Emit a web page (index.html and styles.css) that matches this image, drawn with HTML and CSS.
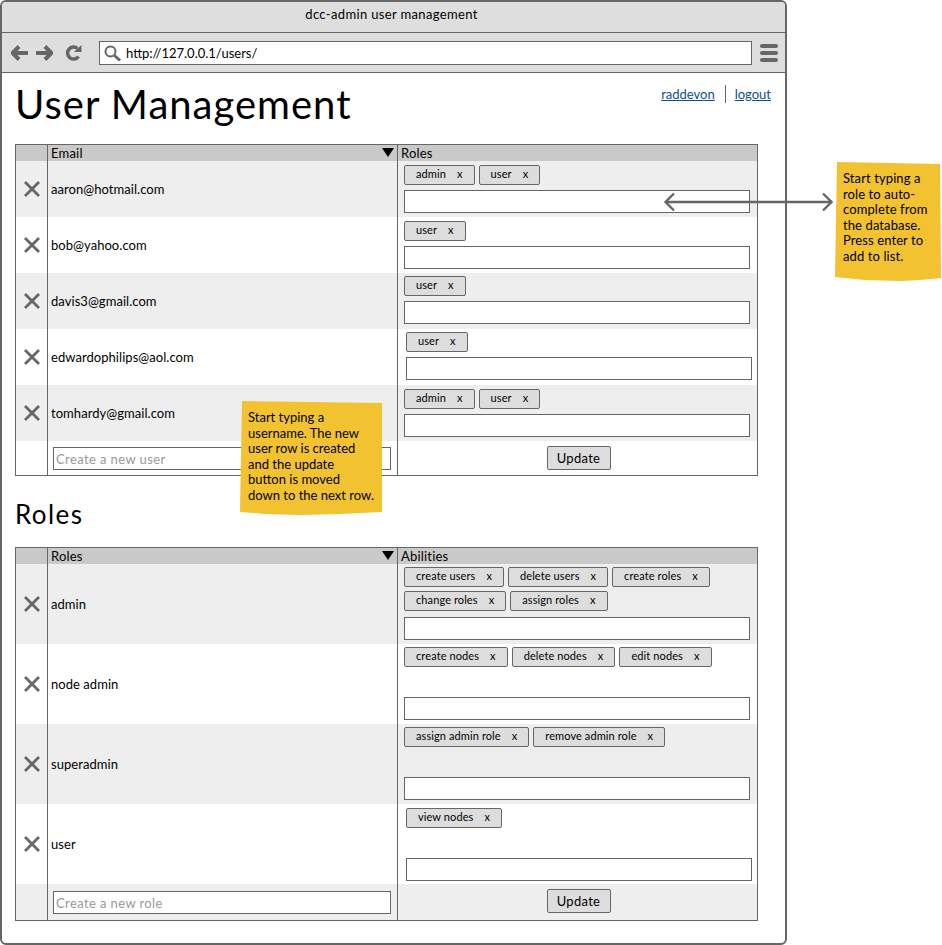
FILE: index.html
```html
<!DOCTYPE html>
<html lang="en">
<head>
  <meta charset="UTF-8">
  <title>dcc-admin user management</title>
  <link rel="stylesheet" href="styles.css">
</head>
<body>
  <div class="window">
    <div class="titlebar">dcc-admin user management</div>
    <div class="toolbar">
      <svg class="nav-icon" width="18" height="16" viewBox="0 0 18 16"><path d="M8 1.500 1.500 8 8 14.500M2.500 8H17" fill="none" stroke="#666" stroke-width="4"/></svg>
      <svg class="nav-icon forward" width="17" height="16" viewBox="0 0 17 16"><path d="M9 1.500 15.500 8 9 14.500M14.500 8H0" fill="none" stroke="#666" stroke-width="4"/></svg>
      <svg class="nav-icon" width="17" height="16" viewBox="0 0 17 16"><path d="M13.500 11.500A6 6 0 1 1 12.500 3.500" fill="none" stroke="#666" stroke-width="3.500"/><path d="M9 7h7.500V0z" fill="#666"/></svg>
      <div class="address">
        <svg width="17" height="16" viewBox="0 0 17 16"><circle cx="6.500" cy="6.500" r="5" fill="none" stroke="#666" stroke-width="2"/><path d="M10.500 10.500 16 15.500" stroke="#666" stroke-width="3"/></svg>
        <span>http://127.0.0.1/users/</span>
      </div>
      <div class="menu-icon"><i></i><i></i><i></i></div>
    </div>

    <div class="main">
      <div class="page-head">
        <h1>User Management</h1>
        <div class="links"><a href="#">raddevon</a><a href="#">logout</a></div>
      </div>

      <div class="table">
        <div class="row head">
          <div class="cell"></div>
          <div class="cell sortable">Email<b class="sort"></b></div>
          <div class="cell">Roles</div>
        </div>
        <div class="row user-row grey">
          <div class="cell del"><svg width="16" height="16" viewBox="0 0 16 16"><path d="M1 1 15 15M15 1 1 15" stroke="#666" stroke-width="2.800"/></svg></div>
          <div class="cell name">aaron@hotmail.com</div>
          <div class="cell tags low"><div class="tag-list"><span class="tag">admin<u>x</u></span><span class="tag">user<u>x</u></span></div><div class="box"></div></div>
        </div>
        <div class="row user-row">
          <div class="cell del"><svg width="16" height="16" viewBox="0 0 16 16"><path d="M1 1 15 15M15 1 1 15" stroke="#666" stroke-width="2.800"/></svg></div>
          <div class="cell name">bob@yahoo.com</div>
          <div class="cell tags low"><div class="tag-list"><span class="tag">user<u>x</u></span></div><div class="box"></div></div>
        </div>
        <div class="row user-row grey">
          <div class="cell del"><svg width="16" height="16" viewBox="0 0 16 16"><path d="M1 1 15 15M15 1 1 15" stroke="#666" stroke-width="2.800"/></svg></div>
          <div class="cell name">davis3@gmail.com</div>
          <div class="cell tags high"><div class="tag-list"><span class="tag">user<u>x</u></span></div><div class="box"></div></div>
        </div>
        <div class="row user-row">
          <div class="cell del"><svg width="16" height="16" viewBox="0 0 16 16"><path d="M1 1 15 15M15 1 1 15" stroke="#666" stroke-width="2.800"/></svg></div>
          <div class="cell name">edwardophilips@aol.com</div>
          <div class="cell tags shift high"><div class="tag-list"><span class="tag">user<u>x</u></span></div><div class="box"></div></div>
        </div>
        <div class="row user-row grey">
          <div class="cell del"><svg width="16" height="16" viewBox="0 0 16 16"><path d="M1 1 15 15M15 1 1 15" stroke="#666" stroke-width="2.800"/></svg></div>
          <div class="cell name">tomhardy@gmail.com</div>
          <div class="cell tags low"><div class="tag-list"><span class="tag">admin<u>x</u></span><span class="tag">user<u>x</u></span></div><div class="box"></div></div>
        </div>
        <div class="row foot">
          <div class="cell"></div>
          <div class="cell new"><div class="box hint">Create a new user</div></div>
          <div class="cell action"><button>Update</button></div>
        </div>
      </div>

      <h2>Roles</h2>

      <div class="table">
        <div class="row head">
          <div class="cell"></div>
          <div class="cell sortable">Roles<b class="sort"></b></div>
          <div class="cell">Abilities</div>
        </div>
        <div class="row role-row grey">
          <div class="cell del"><svg width="16" height="16" viewBox="0 0 16 16"><path d="M1 1 15 15M15 1 1 15" stroke="#666" stroke-width="2.800"/></svg></div>
          <div class="cell name">admin</div>
          <div class="cell tags"><div class="tag-list"><span class="tag">create users<u>x</u></span><span class="tag">delete users<u>x</u></span><span class="tag">create roles<u>x</u></span><span class="tag">change roles<u>x</u></span><span class="tag">assign roles<u>x</u></span></div><div class="box"></div></div>
        </div>
        <div class="row role-row">
          <div class="cell del"><svg width="16" height="16" viewBox="0 0 16 16"><path d="M1 1 15 15M15 1 1 15" stroke="#666" stroke-width="2.800"/></svg></div>
          <div class="cell name">node admin</div>
          <div class="cell tags"><div class="tag-list"><span class="tag">create nodes<u>x</u></span><span class="tag">delete nodes<u>x</u></span><span class="tag">edit nodes<u>x</u></span></div><div class="box"></div></div>
        </div>
        <div class="row role-row grey">
          <div class="cell del"><svg width="16" height="16" viewBox="0 0 16 16"><path d="M1 1 15 15M15 1 1 15" stroke="#666" stroke-width="2.800"/></svg></div>
          <div class="cell name">superadmin</div>
          <div class="cell tags"><div class="tag-list"><span class="tag">assign admin role<u>x</u></span><span class="tag">remove admin role<u>x</u></span></div><div class="box"></div></div>
        </div>
        <div class="row role-row">
          <div class="cell del"><svg width="16" height="16" viewBox="0 0 16 16"><path d="M1 1 15 15M15 1 1 15" stroke="#666" stroke-width="2.800"/></svg></div>
          <div class="cell name">user</div>
          <div class="cell tags shift"><div class="tag-list"><span class="tag">view nodes<u>x</u></span></div><div class="box"></div></div>
        </div>
        <div class="row foot grey">
          <div class="cell"></div>
          <div class="cell new"><div class="box hint">Create a new role</div></div>
          <div class="cell action"><button>Update</button></div>
        </div>
      </div>
    </div>
  </div>

  <!-- notes and the arrow sit on top of the wireframe -->
  <svg class="arrow" width="172" height="20" viewBox="0 0 172 20"><path d="M11 1.500 2.500 10 11 18.500M3 10H169" fill="none" stroke="#666" stroke-width="2.400"/><path d="M160 1.500 168.500 10 160 18.500" fill="none" stroke="#666" stroke-width="2.400"/></svg>
  <div class="note note-role">Start typing a role to auto-complete from the database. Press enter to add to list.</div>
  <div class="note note-user">Start typing a username. The new user row is created and the update button is moved down to the next row.</div>
</body>
</html>
```

FILE: styles.css
```css
* {
  margin: 0;
  padding: 0;
  box-sizing: border-box;
}

body {
  position: relative;
  width: 942px;
  height: 945px;
  overflow: hidden;
  background-color: #fff;
  color: #000;
  font-family: Lato, "Liberation Sans", sans-serif;
  font-size: 13px;
}

.window {
  width: 787px;
  height: 945px;
  border: 2px solid #666;
  border-radius: 6px;
  overflow: hidden;
}

.titlebar {
  height: 31px;
  padding-top: 4px;
  padding-right: 4px;
  background-color: #dedede;
  border-bottom: 1px solid #666;
  text-align: center;
  line-height: 16px;
  letter-spacing: 0.35px;
}

.toolbar {
  display: flex;
  align-items: center;
  height: 40px;
  padding-left: 9px;
  background-color: #dedede;
  border-bottom: 1px solid #666;
}

.nav-icon {
  margin-right: 7px;
}

.nav-icon.forward {
  margin-right: 12px;
}

.address {
  display: flex;
  align-items: center;
  gap: 5px;
  width: 653px;
  height: 24px;
  margin-left: 10px;
  padding-left: 4px;
  background-color: #fff;
  border: 1px solid #666;
}

.menu-icon {
  display: flex;
  flex-direction: column;
  gap: 3px;
  margin-left: 8px;
}

.menu-icon i {
  display: block;
  width: 18px;
  height: 4px;
  background-color: #666;
  border-radius: 2px;
}

.main {
  padding-left: 13px;
}

.page-head {
  display: flex;
  justify-content: space-between;
  width: 756px;
  height: 71px;
}

h1 {
  font-size: 40px;
  font-weight: 400;
  line-height: 62px;
  letter-spacing: 1px;
}

.links {
  display: flex;
  align-items: flex-start;
  margin-top: 12px;
}

.links a {
  color: #0b4f97;
  line-height: 18px;
}

.links a:first-child {
  padding-right: 10px;
  margin-right: 9px;
  border-right: 1px solid #666;
}

.table {
  width: 743px;
  border: 1px solid #666;
}

.row {
  display: grid;
  grid-template-columns: 32px 350px 1fr;
}

.grey {
  background-color: #eee;
}

.cell:not(:last-child) {
  border-right: 1px solid #666;
}

.head {
  height: 16px;
  line-height: 17px;
  letter-spacing: 0.2px;
  background-color: #c9c9c9;
}

.head .cell {
  padding-left: 3px;
}

.sortable {
  position: relative;
}

.sort {
  position: absolute;
  top: 3px;
  right: 3px;
  width: 0;
  height: 0;
  border-left: 6px solid transparent;
  border-right: 6px solid transparent;
  border-top: 9px solid #000;
}

.user-row {
  height: 56px;
}

.role-row {
  height: 80px;
}

.foot {
  height: 34px;
}

.table .foot:last-child.grey {
  height: 36px;
}

.del {
  display: flex;
  align-items: center;
  justify-content: center;
}

.name {
  display: flex;
  align-items: center;
  padding-left: 3px;
  letter-spacing: 0.05px;
}

.tags {
  display: flex;
  flex-direction: column;
  justify-content: space-between;
  padding: 3px 7px 4px 6px;
}

.tags.low {
  padding-top: 4px;
}

.tags.shift {
  padding: 4px 5px 3px 8px;
}

.tags.high {
  padding-top: 3px;
  padding-bottom: 5px;
}

.tag-list {
  display: flex;
  flex-wrap: wrap;
  gap: 4px;
}

.tag {
  height: 20px;
  padding: 0 11px;
  background-color: #ddd;
  border: 1px solid #666;
  border-radius: 2px;
  font-size: 11px;
  line-height: 16px;
  letter-spacing: 0.1px;
}

.tag u {
  margin-left: 11px;
  text-decoration: none;
}

.box {
  height: 23px;
  background-color: #fff;
  border: 1px solid #666;
}

.new {
  padding: 6px 6px 0 5px;
}

.grey .new {
  padding-top: 7px;
}

.hint {
  padding-left: 2px;
  color: #999;
  line-height: 22px;
  letter-spacing: 0.4px;
}

.action {
  display: flex;
  justify-content: center;
  padding-top: 5px;
  padding-left: 2px;
}

button {
  width: 64px;
  height: 24px;
  padding-bottom: 1px;
  background-color: #ddd;
  border: 1px solid #666;
  border-radius: 2px;
  font: inherit;
  letter-spacing: 0.3px;
  color: #000;
}

h2 {
  height: 71px;
  font-size: 26px;
  font-weight: 400;
  line-height: 76px;
  letter-spacing: 1.400px;
}

.note {
  position: absolute;
  padding: 9px 8px;
  background-color: #f2c230;
  line-height: 15.500px;
}

.note-role {
  left: 835px;
  top: 162px;
  width: 106px;
  height: 119px;
  letter-spacing: 0.1px;
  clip-path: polygon(2px 0, 105px 2px, 106px 116px, 85px 118px, 65px 119px, 30px 118px, 0 115px);
}

.note-user {
  left: 240px;
  top: 401px;
  width: 143px;
  height: 114px;
  clip-path: polygon(2px 0, 142px 2px, 142px 111px, 100px 113px, 60px 114px, 25px 113px, 0 111px);
}

.arrow {
  position: absolute;
  left: 663px;
  top: 192px;
}
```
